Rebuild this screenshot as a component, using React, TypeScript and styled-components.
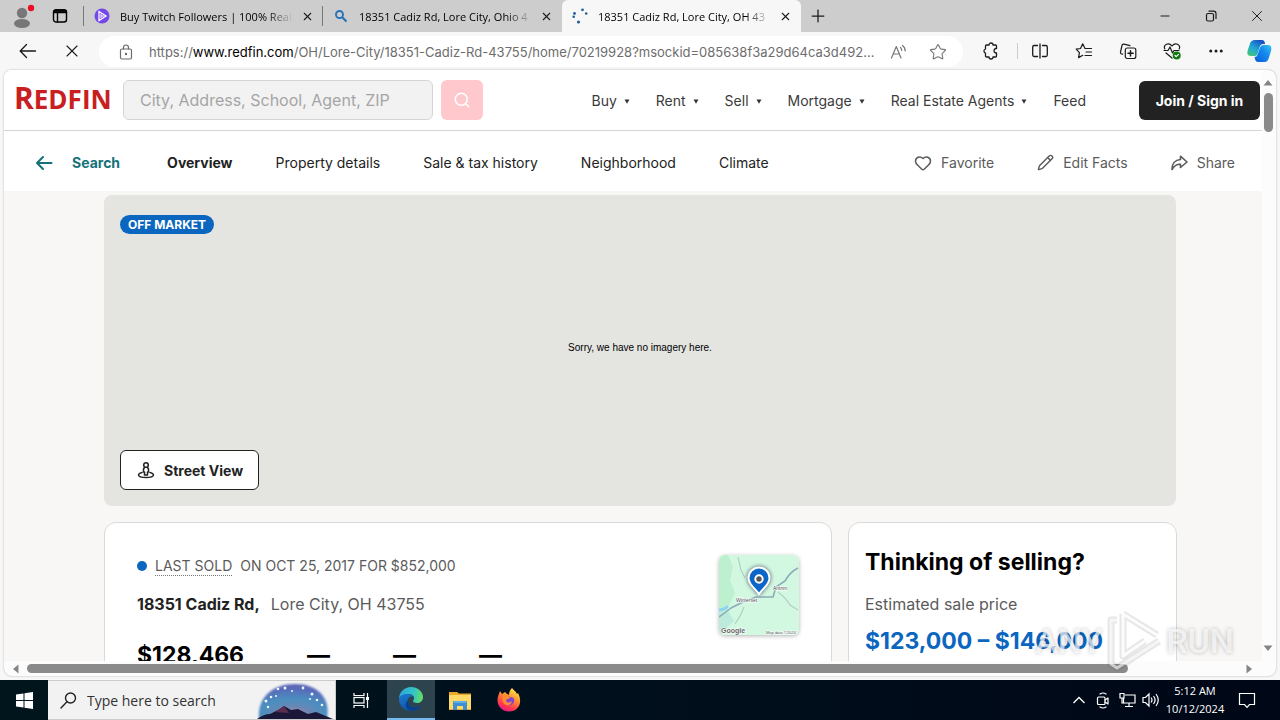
import React from "react";
import styled, { createGlobalStyle } from "styled-components";
import { X, Plus, Minus, Search, Star, Heart, Pencil, Ellipsis } from "lucide-react";

const GlobalStyle = createGlobalStyle`
  * { box-sizing: border-box; }
  body { margin: 0; overflow: hidden; }
  h1, h2, p { margin: 0; font-weight: inherit; }
  button, input { font: inherit; color: inherit; }
  button { background: none; border: 0; padding: 0; }
  a { color: inherit; text-decoration: none; }
  svg { display: block; flex: none; }
`;

const system = `"Open Sans", "Noto Sans", sans-serif`;
const brand = `Inter, "Liberation Sans", sans-serif`;

const Desktop = styled.div`
  height: 100vh;
  display: flex;
  flex-direction: column;
  overflow: hidden;
  background: #f7f7f7;
  font-family: ${system};
`;

/* ---------- Browser chrome ---------- */

const TabStrip = styled.header`
  display: flex;
  flex: none;
  height: 32px;
  background: #cdcdcd;
  font-size: 11px;
  color: #000;
`;

const TabLead = styled.div`
  width: 84px;
  display: flex;
  align-items: center;
  padding-left: 12px;
  gap: 17px;
`;

const Tab = styled.div<{ $active?: boolean }>`
  width: 239px;
  display: flex;
  align-items: center;
  gap: 8px;
  padding: 0 10px;
  background: ${(p) => (p.$active ? "#f7f7f7" : "transparent")};
  border-radius: 6px 6px 0 0;
`;

const TabTitle = styled.span`
  flex: 1;
  min-width: 0;
  white-space: nowrap;
  padding-left: 2px;
  mask-image: linear-gradient(to right, #000 85%, transparent);
`;

const TabDivider = styled.span`
  width: 1px;
  margin: 6px 0 6px -1px;
  background: #777;
`;

const ChromeButton = styled.button<{ $width?: number; $tone?: string }>`
  width: ${(p) => p.$width ?? 44}px;
  flex: none;
  display: flex;
  align-items: center;
  justify-content: center;
  color: ${(p) => p.$tone ?? "#1b1b1b"};
`;

const Spacer = styled.span`
  flex: 1;
`;

const Toolbar = styled.nav`
  display: flex;
  flex: none;
  align-items: stretch;
  height: 38px;
  padding: 0 0 1px 6px;
`;

const AddressBar = styled.div`
  flex: 1;
  min-width: 0;
  display: flex;
  align-items: center;
  margin: 4px 6px 2px 5px;
  padding: 0 5px 0 20px;
  border-radius: 16px;
  background: #fff;
  color: #6d6d6d;
  font-family: ${brand};
  font-size: 13px;
`;

const Url = styled.span`
  flex: 1;
  min-width: 0;
  margin-left: 16px;
  white-space: nowrap;
  b {
    font-weight: 400;
    color: #000;
  }
`;

const ToolDivider = styled.span`
  width: 1px;
  margin: 11px 0 10px 4px;
  background: #ccc;
`;

/* ---------- Page viewport ---------- */

const Viewport = styled.div`
  flex: 1;
  min-height: 0;
  display: grid;
  grid-template-columns: minmax(0, 1fr) 14px;
  grid-template-rows: minmax(0, 1fr) 15px;
  margin: 0 4px 4px;
  overflow: hidden;
  border-radius: 8px;
  background: #fcfcfc;
  box-shadow: 0 0 2px #aaa;
`;

const Page = styled.div`
  overflow: hidden;
  background: #f9f7f5;
  font-family: ${brand};
  font-size: 14px;
  color: #222;
`;

const ScrollTrack = styled.div<{ $row?: boolean }>`
  display: flex;
  flex-direction: ${(p) => (p.$row ? "row" : "column")};
  align-items: center;
  padding: ${(p) => (p.$row ? "0 8px 0 7px" : "10px 2px 10px 0")};
`;

const ScrollThumb = styled.span<{ $row?: boolean }>`
  flex: ${(p) => (p.$row ? "1101" : "39")} 0 0;
  width: ${(p) => (p.$row ? "auto" : "9px")};
  height: ${(p) => (p.$row ? "9px" : "auto")};
  margin: ${(p) => (p.$row ? "0 0 0 6px" : "7px 0 0")};
  border-radius: 5px;
  background: #8a8a8a;
`;

const ScrollRest = styled.span<{ $share: number }>`
  flex: ${(p) => p.$share} 0 0;
`;

const SiteHeader = styled.header`
  height: 61px;
  display: flex;
  align-items: center;
  padding: 0 2px 0 10px;
  background: #fff;
  border-bottom: 1px solid #d5d5d5;
`;

const Logo = styled.a`
  width: 109px;
  padding-bottom: 3px;
  font: 700 26px/32px "Open Sans", sans-serif;
  color: #c82021;
  span {
    font-size: 30px;
  }
`;

const SearchForm = styled.form`
  display: flex;
  gap: 8px;
`;

const SearchInput = styled.input`
  width: 310px;
  height: 40px;
  padding: 0 16px;
  border: 1px solid #d5d5d5;
  border-radius: 6px;
  background: #f2f2f2;
  font-size: 16px;
  &::placeholder {
    color: #a5a5a5;
  }
`;

const SearchButton = styled.button`
  width: 42px;
  height: 40px;
  display: grid;
  place-items: center;
  border-radius: 6px;
  background: #ffc8cc;
  color: #fff;
`;

const SiteNav = styled.nav`
  display: flex;
  gap: 26px;
  margin-left: auto;
  padding-top: 2px;
  color: #3b3b3b;
`;

const NavLink = styled.a`
  display: flex;
  align-items: center;
  gap: 7px;
  line-height: 20px;
  white-space: nowrap;
`;

const JoinButton = styled.button`
  width: 121px;
  height: 39px;
  margin-left: 53px;
  border-radius: 6px;
  background: #222;
  color: #fff;
  font-weight: 700;
`;

const SubNav = styled.nav`
  height: 60px;
  display: flex;
  align-items: center;
  gap: 43px;
  padding: 3px 27px 0 31px;
  background: #fff;
  white-space: nowrap;
`;

const SubLink = styled.a<{ $tone?: string; $bold?: boolean }>`
  display: flex;
  align-items: center;
  gap: 9px;
  line-height: 20px;
  color: ${(p) => p.$tone ?? "#222"};
  font-weight: ${(p) => (p.$bold ? 700 : 400)};
`;

const BackLink = styled(SubLink)`
  gap: 19px;
  padding-right: 4px;
`;

const SubActions = styled.div`
  display: flex;
  gap: 43px;
  margin-left: auto;
`;

const Content = styled.main`
  padding: 4px 85px 0 100px;
`;

const Hero = styled.section`
  height: 311px;
  display: flex;
  flex-direction: column;
  align-items: flex-start;
  justify-content: space-between;
  padding: 20px 16px 16px;
  margin-right: 1px;
  border-radius: 8px;
  background: #e4e5e0;
`;

const Badge = styled.span`
  padding: 0 8px;
  border-radius: 10px;
  background: #0b66bf;
  color: #fff;
  font-size: 12px;
  font-weight: 700;
  line-height: 19px;
`;

const NoImagery = styled.p`
  align-self: center;
  padding-top: 11px;
  font: 10px/12px "Liberation Sans", Arial, sans-serif;
  color: #000;
`;

const StreetViewButton = styled.button`
  height: 40px;
  display: flex;
  align-items: center;
  gap: 9px;
  padding: 0 15px 0 16px;
  border: 1px solid #222;
  border-radius: 6px;
  background: #fff;
  font-weight: 700;
`;

const Cards = styled.div`
  display: flex;
  gap: 16px;
  margin-top: 16px;
`;

const Card = styled.section<{ $side?: boolean }>`
  height: 320px;
  flex: ${(p) => (p.$side ? "0 0 329px" : "1")};
  min-width: 0;
  padding: ${(p) => (p.$side ? "23px 16px" : "32px")};
  border: 1px solid #d9d9d9;
  border-radius: 12px;
  background: #fff;
`;

const CardTop = styled.div`
  display: flex;
  justify-content: space-between;
  height: 81px;
`;

const SoldLine = styled.p`
  display: flex;
  align-items: center;
  gap: 8px;
  margin-top: 1px;
  line-height: 20px;
  color: #5b5b5b;
  abbr {
    line-height: 18px;
    text-decoration: none;
    border-bottom: 1px dotted #777;
  }
`;

const Dot = styled.span`
  width: 10px;
  height: 10px;
  border-radius: 50%;
  background: #0b66bf;
`;

const Address = styled.h1`
  display: flex;
  gap: 11px;
  margin-top: 16px;
  font-size: 16px;
  line-height: 24px;
  color: #5b5b5b;
  strong {
    color: #222;
  }
`;

const MapThumb = styled.a`
  width: 80px;
  height: 80px;
  overflow: hidden;
  border-radius: 6px;
  box-shadow: 0 1px 4px rgba(0, 0, 0, 0.3);
`;

const Stats = styled.div`
  display: flex;
  gap: 63px;
  margin-top: 2px;
  font-size: 23px;
  font-weight: 700;
  line-height: 34px;
  color: #000;
`;

const SideTitle = styled.h2`
  font-size: 23px;
  font-weight: 700;
  line-height: 32px;
  color: #000;
`;

const SideLabel = styled.p`
  margin-top: 14px;
  font-size: 16px;
  line-height: 24px;
  color: #5b5b5b;
`;

const SidePrice = styled.p`
  margin-top: 9px;
  font-size: 23px;
  font-weight: 700;
  line-height: 32px;
  color: #0b66bf;
`;

/* ---------- Watermark ---------- */

const Watermark = styled.div`
  position: absolute;
  right: 46px;
  bottom: 48px;
  display: flex;
  align-items: center;
  gap: 3px;
  font: 500 34px/60px Roboto, sans-serif;
  color: rgba(255, 255, 255, 0.7);
  text-shadow: 0 0 4px rgba(0, 0, 0, 0.25);
  pointer-events: none;
`;

/* ---------- Taskbar ---------- */

const Taskbar = styled.footer`
  display: flex;
  flex: none;
  height: 40px;
  background: linear-gradient(to right, #00151c, #000e1c 55%, #000716);
  color: #fff;
`;

const TaskButton = styled.button<{ $active?: boolean; $width?: number }>`
  width: ${(p) => p.$width ?? 49}px;
  flex: none;
  display: grid;
  place-items: center;
  background: ${(p) => (p.$active ? "#2d434d" : "transparent")};
  border-bottom: ${(p) => (p.$active ? "2px solid #76b9ed" : "0")};
`;

const TaskSearch = styled.label`
  width: 288px;
  display: flex;
  align-items: center;
  gap: 10px;
  padding-left: 12px;
  border: 1px solid #ccc;
  border-left: 0;
  background: #f2f2f2;
  color: #222;
  font-size: 14px;
  input {
    flex: 1;
    min-width: 0;
    padding: 0;
    border: 0;
    background: none;
  }
  input::placeholder {
    color: #333;
    opacity: 1;
  }
`;

const Clock = styled.time`
  width: 64px;
  text-align: center;
  font-size: 11px;
  line-height: 18px;
  padding-top: 2px;
`;

/* ---------- Drawings ---------- */

const line = { fill: "none", stroke: "currentColor", strokeLinecap: "round", strokeLinejoin: "round" } as const;

const Avatar = () => (
  <svg width="23" height="28" viewBox="0 0 23 28">
    <circle cx="10" cy="11" r="5.2" fill="#777" />
    <ellipse cx="10" cy="21.500" rx="8" ry="4.500" fill="#777" />
    <circle cx="19" cy="6" r="3.200" fill="#e81123" />
  </svg>
);

const TabActionsIcon = () => (
  <svg width="16" height="16" viewBox="0 0 16 16" {...line} strokeWidth="1.4">
    <rect x="1.500" y="2" width="13" height="12" rx="2.500" />
    <path d="M2 4.500V4a2 2 0 0 1 2-2h8a2 2 0 0 1 2.500 2v.5z" fill="#111" />
    <path d="M5.500 5v9" />
  </svg>
);

const TwitchServiceIcon = () => (
  <svg width="16" height="16" viewBox="0 0 16 16">
    <circle cx="8" cy="8" r="7.500" fill="#7547e8" />
    <path d="M5 3.500 12 8l-7 4.500z" fill="none" stroke="#fff" strokeWidth="1.300" />
    <path d="M7 6v4M7 8h3" stroke="#fff" />
  </svg>
);

const BlueSearchIcon = () => (
  <svg width="16" height="16" viewBox="0 0 16 16" fill="none" stroke="#2673b8" strokeWidth="1.900">
    <circle cx="6.500" cy="6.500" r="3.500" />
    <path d="m9 9 4.500 4.500" strokeWidth="2.200" />
  </svg>
);

const LoadingIcon = () => (
  <svg width="16" height="16" viewBox="0 0 16 16" fill="#245f9b">
    <circle cx="2.500" cy="5.500" r="1.400" />
    <circle cx="1.700" cy="8.700" r="1.300" />
    <circle cx="6.500" cy="14" r="1.600" />
    <circle cx="10.500" cy="1.800" r="1.400" />
    <circle cx="14.200" cy="5.500" r="1.300" />
  </svg>
);

const RestoreIcon = () => (
  <svg width="12" height="12" viewBox="0 0 12 12" {...line} strokeWidth="1.200">
    <rect x="1.500" y="3.500" width="7" height="7.500" rx="1.500" />
    <path d="M4 1.200h4.500A2.500 2.500 0 0 1 11 3.700V8.500" />
  </svg>
);

const LockIcon = () => (
  <svg width="14" height="16" viewBox="0 0 14 16" {...line} strokeWidth="1.200">
    <rect x="1.500" y="5" width="11" height="10" rx="1.500" />
    <path d="M4.500 5V3.500a2.500 2.500 0 0 1 5 0V5" />
    <circle cx="7" cy="10" r=".6" fill="currentColor" />
  </svg>
);

const ReadAloudIcon = () => (
  <svg width="17" height="16" viewBox="0 0 17 16" {...line} strokeWidth="1.200">
    <path d="M1.500 14 6.300 2.500 11 14M3.200 10h6.200M10.500 3.500q1.200 1 1.200 3M12.500 1.500q2.700 2 2.700 5.500" />
  </svg>
);

const ExtensionIcon = () => (
  <svg width="18" height="18" viewBox="0 0 18 18" {...line} strokeWidth="1.300">
    <path d="M4.500 3H7a2 2 0 0 1 4 0h2.500q1 0 1 1v2.500h-.7a2.300 2.300 0 0 0 0 4.500h.7v3q0 1-1 1H11a2 2 0 0 1-4 0H4.500q-1 0-1-1v-2.800a2.200 2.200 0 0 1 0-4.200V4q0-1 1-1z" />
  </svg>
);

const SplitIcon = () => (
  <svg width="18" height="18" viewBox="0 0 18 18" {...line} strokeWidth="1.300">
    <path d="M9 2v14M6.500 3.500H3.200A1.500 1.500 0 0 0 1.700 5v8a1.500 1.500 0 0 0 1.500 1.500h3.300M11.500 3.500h3.300A1.500 1.500 0 0 1 16.300 5v8a1.500 1.500 0 0 1-1.500 1.500h-3.300" />
  </svg>
);

const FavoritesIcon = () => (
  <svg width="18" height="18" viewBox="0 0 18 18" {...line} strokeWidth="1.200">
    <path d="M10 6.500 7.700 1.800 5.500 6.500l-4.300.7 3.200 3.400-.8 5 4.200-2.300M10 6.500h6.500M11 10h5.500M10 13.500h6.500" />
  </svg>
);

const CollectionsIcon = () => (
  <svg width="18" height="18" viewBox="0 0 18 18" {...line} strokeWidth="1.200">
    <path d="m3.700 12.200-1-.2a1.600 1.600 0 0 1-1.200-2L3 3.500a1.700 1.700 0 0 1 2-1.300l6 1.500" />
    <rect x="6.300" y="6" width="10.500" height="10.500" rx="2" />
    <path d="M11.500 8.700v5.200M9 11.300h5.200" strokeWidth="1.500" />
  </svg>
);

const HealthIcon = () => (
  <svg width="18" height="18" viewBox="0 0 18 18" {...line} strokeWidth="1.200">
    <path d="M1.800 7C0 3 5.500-.5 9 4c3.500-4.500 9-1 7.200 3M1 8.500h4L7 5l2.500 6L11 8.500h5M3 11l6 5" />
    <circle cx="13.700" cy="13.500" r="4" fill="#107c10" stroke="none" />
    <path d="m12 13.500 1.200 1.200 2.300-2.300" stroke="#fff" />
  </svg>
);

const CopilotIcon = () => (
  <svg width="25" height="24" viewBox="0 0 25 24">
    <defs>
      <linearGradient id="copilotLeft" x1="0" y1="1" x2=".7" y2="0">
        <stop offset="0" stopColor="#4acb69" />
        <stop offset=".5" stopColor="#21a9d5" />
        <stop offset="1" stopColor="#174fc2" />
      </linearGradient>
      <linearGradient id="copilotRight" x1="0" y1="1" x2="1" y2="0">
        <stop offset="0" stopColor="#0a5bd8" />
        <stop offset=".6" stopColor="#168cf0" />
        <stop offset="1" stopColor="#3ac7f0" />
      </linearGradient>
    </defs>
    <path d="M8 1h7q2 0 2.700 2L18 5h-2q-2.400 0-3.200 2.500l-2 7Q10 17 7.500 17H4Q-1 17 .8 11L3 4.500Q4.200 1 8 1z" fill="url(#copilotLeft)" />
    <path d="M17.500 23H11q-2 0-2.700-2L7.500 18q2.500 0 3.200-2.500l2.300-7Q13.800 6 16.500 6H21q4.500 0 3 6l-2.400 7.500Q20.500 23 17.500 23z" fill="url(#copilotRight)" />
  </svg>
);

const Caret = () => (
  <svg width="6" height="5" viewBox="0 0 6 5">
    <path d="M.5.500h5L3 4.800z" fill="#333" />
  </svg>
);

const Arrow = ({ turn = 0 }: { turn?: number }) => (
  <svg width="10" height="6" viewBox="-5 -3 10 6" overflow="visible">
    <path d="M-4.500 2.500 0-3l4.500 5.500z" fill="#858585" transform={`rotate(${turn})`} />
  </svg>
);

const BackArrowIcon = () => (
  <svg width="18" height="18" viewBox="0 0 18 18" {...line} strokeWidth="2">
    <path d="M16.500 9H2M8 3 2 9l6 6" />
  </svg>
);

const ShareIcon = () => (
  <svg width="17" height="16" viewBox="0 0 17 16" {...line} strokeWidth="1.600">
    <path d="M9.500 1.200 16 7l-6.500 5.500V9.300C5.500 9 3 11 1 14.500.8 9 4 5 9.500 4.500z" />
  </svg>
);

const PegmanIcon = () => (
  <svg width="18" height="18" viewBox="0 0 18 18" {...line} strokeWidth="1.500">
    <circle cx="9" cy="4" r="2.300" />
    <path d="M7.500 6.500 6.500 8v3h1v3h3v-3h1V8l-1-1.500M5 11.500c-6 1.500-4 5 4 5s10-3.500 4-5" />
  </svg>
);

const MapDrawing = () => (
  <svg width="80" height="80" viewBox="0 0 80 80">
    <rect width="80" height="80" fill="#d3f8e2" />
    <path d="M0 0h9l5 12-3 13 5 13-6 13L0 55z" fill="#bcf0cf" />
    <path d="M0 54l8-2 3 7 4 7-15 14z" fill="#bcebdc" />
    <path d="M19 2l3 13 4 8M25 52q-3 9-9 17M59 37q8 6 12 13l8 5" fill="none" stroke="#b3cfc4" strokeWidth="1.200" />
    <path d="M0 62q7-5 12-9 12-7 25-11h17l3-10 9-6q5-9 13-13" fill="none" stroke="#8bacb9" strokeWidth="1.600" />
    <path d="M0 55q5 0 9-4" fill="none" stroke="#8bd5ee" strokeWidth="3" />
    <g fontFamily="Liberation Sans, sans-serif" fill="#44504c" stroke="#fff" strokeWidth="1" paintOrder="stroke">
      <text x="17" y="47" fontSize="5">Winterset</text>
      <text x="54" y="35" fontSize="5">Antrim</text>
      <text x="2" y="78" fontSize="7" fontWeight="700" fill="#666">Google</text>
      <text x="47" y="79" fontSize="4">Map data ©2024</text>
    </g>
    <path d="M40 39C36 33 29.500 30 29.500 23a10.500 10.500 0 0 1 21 0C50.500 30 44 33 40 39z" fill="#0b66c8" stroke="#fff" strokeWidth="2" filter="drop-shadow(0 0 2px #456)" />
    <circle cx="40" cy="24" r="3.700" fill="#555" stroke="#fff" strokeWidth="2" />
  </svg>
);

const PlayMark = () => (
  <svg width="58" height="62" viewBox="0 0 58 62" fill="none" strokeLinejoin="round">
    <g stroke="#555" strokeOpacity=".14" strokeWidth="7">
      <path d="M18 4 52 25M18 4v42l22-15" />
      <path d="M12 10H6v44l6 4 42-27" />
    </g>
    <g stroke="#fff" strokeOpacity=".85" strokeWidth="3">
      <path d="M18 4 52 25M18 4v42l22-15" />
      <path d="M12 10H6v44l6 4 42-27" strokeOpacity=".6" />
    </g>
  </svg>
);

const WindowsIcon = () => (
  <svg width="17" height="17" viewBox="0 0 17 17" fill="#fff">
    <path d="M0 2.500 7.500 1.400V8H0zM8.500 1.300 17 0v8H8.500zM0 9h7.500v6.600L0 14.500zM8.500 9H17v8l-8.500-1.300z" />
  </svg>
);

const TaskSearchIcon = () => (
  <svg width="17" height="17" viewBox="0 0 17 17" {...line} strokeWidth="1.400">
    <circle cx="10.500" cy="6" r="5" />
    <path d="m7 9.800-6 6.200" />
  </svg>
);

const NightArt = styled.svg`
  align-self: flex-end;
`;

const SearchArt = () => (
  <NightArt width="78" height="37" viewBox="0 0 78 37">
    <defs>
      <radialGradient id="nightSky" cx=".5" cy=".9" r=".8">
        <stop offset="0" stopColor="#d9969a" />
        <stop offset=".3" stopColor="#6a86b4" />
        <stop offset=".6" stopColor="#4a8fc0" />
        <stop offset="1" stopColor="#5a66b8" />
      </radialGradient>
      <filter id="skySoft" x="-.1" y="-.1" width="1.200" height="1.200">
        <feGaussianBlur stdDeviation="1" />
      </filter>
    </defs>
    <path d="M2 37C0 15 16 2 38 2s36 13 32 35z" fill="url(#nightSky)" filter="url(#skySoft)" />
    <path d="M0 37q7-5 13-5l10-5 4-3 7 4 7-1 10 5 8-2 17 7z" fill="#1b1738" />
    <path d="m18 30 9-6 5 7z" fill="#5a2d4d" />
    <g fill="#e8f8ff">
      <circle cx="9" cy="19" r="1.500" /><circle cx="14" cy="15" r="1.300" /><circle cx="11" cy="25" r="1.200" />
      <circle cx="21" cy="7" r="1.300" /><circle cx="28" cy="6" r="1.500" /><circle cx="35" cy="9" r="1" />
      <circle cx="46" cy="6" r="1.400" /><circle cx="55" cy="12" r="1.500" /><circle cx="60" cy="18" r="1.300" />
      <circle cx="65" cy="23" r="1.300" /><circle cx="19" cy="14" r="1" /><circle cx="53" cy="17" r="1" />
    </g>
  </NightArt>
);

const TaskViewIcon = () => (
  <svg width="17" height="17" viewBox="0 0 17 17" fill="none" stroke="#fff" strokeWidth="1.200">
    <path d="M1 1v2.500h10V1M1 16v-2.500h10V16M14.500 1v15" />
    <rect x="1" y="5.500" width="10" height="5.500" />
    <path d="M14.500 5v3" strokeWidth="3" />
  </svg>
);

const EdgeIcon = () => (
  <svg width="24" height="24" viewBox="0 0 24 24">
    <defs>
      <linearGradient id="edgeTop" x1="0" y1=".5" x2="1" y2=".6">
        <stop offset="0" stopColor="#2aa9e0" />
        <stop offset=".6" stopColor="#35c3c4" />
        <stop offset="1" stopColor="#66e05e" />
      </linearGradient>
      <linearGradient id="edgeBody" x1="0" y1="0" x2=".6" y2="1">
        <stop offset="0" stopColor="#1a7dd3" />
        <stop offset="1" stopColor="#0c4fa0" />
      </linearGradient>
    </defs>
    <path d="M0 12C0 5 5.500 0 12 0s12 4.600 12 10c0 4-3 6-6 6-2.500 0-4-1-4-2 0-.7 1-1.200 1-3 0-2.500-3-4-6-4-5 0-9 3-9 5z" fill="url(#edgeTop)" />
    <path d="M0 12c0-3 4-5 8.500-5 3 0 5.500 1.500 6 3C11 8.500 8.500 11 9 14.500c.6 4 5 6 8.500 5.500 2-.3 3.500-1 4.500-1.500C20 22 16 24 12 24 5 24 0 18.500 0 12z" fill="url(#edgeBody)" />
    <path d="M9 13c-.5 5 4 8.500 8.500 7 2-.5 3.500-1 4.500-1.500C19 23.500 14 24.500 10 23c-4-2-4-7-1-10z" fill="#0a3f8a" />
  </svg>
);

const FolderIcon = () => (
  <svg width="22" height="19" viewBox="0 0 22 19">
    <path d="M0 1h8l2 1.500h12V19H0z" fill="#e8a92d" />
    <path d="M0 4h22v14H0z" fill="#ffd968" />
    <path d="M4 11q0-1 1-1h12q1 0 1 1v8h-4v-4H8v4H4z" fill="#3d8fd1" />
    <path d="M5 10h12v2H5z" fill="#5eb1e8" />
  </svg>
);

const FirefoxIcon = () => (
  <svg width="24" height="24" viewBox="0 0 24 24">
    <defs>
      <linearGradient id="foxFire" x1=".8" y1="0" x2=".3" y2="1">
        <stop offset="0" stopColor="#fff14f" />
        <stop offset=".4" stopColor="#ff9530" />
        <stop offset=".75" stopColor="#ff3b4c" />
        <stop offset="1" stopColor="#e31587" />
      </linearGradient>
    </defs>
    <path d="M15 0c1 2 4 3 5 6l1-1c5 9 1 18.500-9 18.500S-1.500 14 1.500 7L3 3l2 3 3-2 2 2c1 0 2 1 2 1 0-3 1-5 3-7z" fill="url(#foxFire)" />
    <path d="M8 8q3-1 5 1 5 0 4 5-2 4-7 3-3-1-3-5l2-1z" fill="#8045d5" />
    <path d="M6 7q4-1 5 1l3 1-3 2q-2 0-2 2 2 3 6 0-1 5-6 4-5-2-3-10z" fill="#ff8b2c" />
  </svg>
);

const TrayChevron = () => (
  <svg width="14" height="8" viewBox="0 0 14 8" fill="none" stroke="#fff" strokeWidth="1.300">
    <path d="M1.500 7 7 1.500 12.500 7" />
  </svg>
);

const MeetIcon = () => (
  <svg width="14" height="17" viewBox="0 0 14 17" {...line} strokeWidth="1.200">
    <rect x="1.500" y="5" width="7.500" height="7.500" rx="1" />
    <path d="m9 8 3-2v6L9 10M4 2q3-2 6 0M4 15q3 2 6 0" />
  </svg>
);

const NetworkIcon = () => (
  <svg width="17" height="16" viewBox="0 0 17 16" fill="none" stroke="#fff" strokeWidth="1.200">
    <path d="M6 3h10v8H4.500V6M10 11v3M6 14.500h8" />
    <path d="M1 1.500h4V6H1zM3 6v5h1.500" />
  </svg>
);

const VolumeIcon = () => (
  <svg width="18" height="16" viewBox="0 0 18 16" fill="none" stroke="#fff" strokeWidth="1.200">
    <path d="M1 5.500h2.500L7 2v12l-3.500-3.500H1zM9 5.500q2 2.500 0 5M11.500 4q3.200 4 0 8M14 2q4.500 6 0 12" />
  </svg>
);

const NoticeIcon = () => (
  <svg width="18" height="17" viewBox="0 0 18 17" fill="none" stroke="#fff" strokeWidth="1.200">
    <path d="M1.500 1.500h15v11h-5L9 15.300l-2.500-2.800h-5z" />
  </svg>
);

/* ---------- Data ---------- */

const tabs = [
  { title: "Buy Twitch Followers | 100% Real", icon: <TwitchServiceIcon /> },
  { title: "18351 Cadiz Rd, Lore City, Ohio 4", icon: <BlueSearchIcon /> },
  { title: "18351 Cadiz Rd, Lore City, OH 43", icon: <LoadingIcon />, active: true },
];

const siteLinks = ["Buy", "Rent", "Sell", "Mortgage", "Real Estate Agents", "Feed"];
const sections = ["Property details", "Sale & tax history", "Neighborhood", "Climate"];

const tools = [
  { label: "Split screen", icon: <SplitIcon /> },
  { label: "Favorites", icon: <FavoritesIcon /> },
  { label: "Collections", icon: <CollectionsIcon /> },
  { label: "Browser essentials", icon: <HealthIcon /> },
  { label: "Settings and more", icon: <Ellipsis size={18} /> },
];

export default function App() {
  return (
    <Desktop>
      <GlobalStyle />
      <TabStrip>
        <TabLead>
          <Avatar />
          <TabActionsIcon />
        </TabLead>
        <TabDivider />
        {tabs.map((tab, i) => (
          <React.Fragment key={tab.title}>
            <Tab $active={tab.active}>
              {tab.icon}
              <TabTitle>{tab.title}</TabTitle>
              <ChromeButton $width={12} aria-label="Close tab">
                <X size={13} strokeWidth={2} />
              </ChromeButton>
            </Tab>
            {i === 0 && <TabDivider />}
          </React.Fragment>
        ))}
        <ChromeButton $width={34} aria-label="New tab">
          <Plus size={20} strokeWidth={1.5} />
        </ChromeButton>
        <Spacer />
        <ChromeButton $width={46} aria-label="Minimize">
          <Minus size={14} strokeWidth={1.7} />
        </ChromeButton>
        <ChromeButton $width={46} aria-label="Restore">
          <RestoreIcon />
        </ChromeButton>
        <ChromeButton $width={46} aria-label="Close">
          <X size={18} strokeWidth={1.3} />
        </ChromeButton>
      </TabStrip>

      <Toolbar>
        <ChromeButton aria-label="Back">
          <svg width="18" height="16" viewBox="0 0 18 16" {...line} strokeWidth="1.300">
            <path d="M16.500 8H1.500M7.500 1.500 1.200 8l6.300 6.500" />
          </svg>
        </ChromeButton>
        <ChromeButton aria-label="Stop">
          <X size={20} strokeWidth={1.3} />
        </ChromeButton>
        <AddressBar>
          <LockIcon />
          <Url>
            https://<b>www.redfin.com</b>/OH/Lore-City/18351-Cadiz-Rd-43755/home/70219928?msockid=085638f3a29d64ca3d492...
          </Url>
          <ChromeButton $width={40} $tone="#777" aria-label="Read aloud">
            <ReadAloudIcon />
          </ChromeButton>
          <ChromeButton $width={40} $tone="#777" aria-label="Add to favorites">
            <Star size={18} strokeWidth={1.5} />
          </ChromeButton>
        </AddressBar>
        <ChromeButton aria-label="Extensions">
          <ExtensionIcon />
        </ChromeButton>
        <ToolDivider />
        {tools.map((tool) => (
          <ChromeButton key={tool.label} aria-label={tool.label}>
            {tool.icon}
          </ChromeButton>
        ))}
        <ChromeButton $width={42} aria-label="Copilot">
          <CopilotIcon />
        </ChromeButton>
      </Toolbar>

      <Viewport>
        <Page>
          <SiteHeader>
            <Logo href="#" aria-label="Redfin">
              <span>R</span>EDFIN
            </Logo>
            <SearchForm>
              <SearchInput aria-label="Search" placeholder="City, Address, School, Agent, ZIP" />
              <SearchButton type="button" aria-label="Submit search">
                <Search size={18} strokeWidth={2} />
              </SearchButton>
            </SearchForm>
            <SiteNav>
              {siteLinks.map((label) => (
                <NavLink href="#" key={label}>
                  {label}
                  {label !== "Feed" && <Caret />}
                </NavLink>
              ))}
            </SiteNav>
            <JoinButton>Join / Sign in</JoinButton>
          </SiteHeader>

          <SubNav>
            <BackLink href="#" $tone="#15727a" $bold>
              <BackArrowIcon />
              Search
            </BackLink>
            <SubLink href="#" $bold>
              Overview
            </SubLink>
            {sections.map((label) => (
              <SubLink href="#" key={label}>
                {label}
              </SubLink>
            ))}
            <SubActions>
              <SubLink as="button" $tone="#5b5b5b">
                <Heart size={18} />
                Favorite
              </SubLink>
              <SubLink as="button" $tone="#5b5b5b">
                <Pencil size={17} />
                Edit Facts
              </SubLink>
              <SubLink as="button" $tone="#5b5b5b">
                <ShareIcon />
                Share
              </SubLink>
            </SubActions>
          </SubNav>

          <Content>
            <Hero>
              <Badge>OFF MARKET</Badge>
              <NoImagery>Sorry, we have no imagery here.</NoImagery>
              <StreetViewButton>
                <PegmanIcon />
                Street View
              </StreetViewButton>
            </Hero>
            <Cards>
              <Card>
                <CardTop>
                  <div>
                    <SoldLine>
                      <Dot />
                      <abbr>LAST SOLD</abbr>
                      <span>ON OCT 25, 2017 FOR $852,000</span>
                    </SoldLine>
                    <Address>
                      <strong>18351 Cadiz Rd,</strong>
                      <span>Lore City, OH 43755</span>
                    </Address>
                  </div>
                  <MapThumb href="#" aria-label="Map">
                    <MapDrawing />
                  </MapThumb>
                </CardTop>
                <Stats>
                  <span>$128,466</span>
                  <span>—</span>
                  <span>—</span>
                  <span>—</span>
                </Stats>
              </Card>
              <Card $side>
                <SideTitle>Thinking of selling?</SideTitle>
                <SideLabel>Estimated sale price</SideLabel>
                <SidePrice>$123,000 – $146,000</SidePrice>
              </Card>
            </Cards>
          </Content>
        </Page>
        <ScrollTrack>
          <Arrow />
          <ScrollThumb />
          <ScrollRest $share={514} />
          <Arrow turn={180} />
        </ScrollTrack>
        <ScrollTrack $row>
          <Arrow turn={-90} />
          <ScrollThumb $row />
          <ScrollRest $share={116} />
          <Arrow turn={90} />
        </ScrollTrack>
      </Viewport>

      <Taskbar>
        <TaskButton $width={48} aria-label="Start">
          <WindowsIcon />
        </TaskButton>
        <TaskSearch>
          <TaskSearchIcon />
          <input aria-label="Search Windows" placeholder="Type here to search" />
          <SearchArt />
        </TaskSearch>
        <TaskButton $width={51} aria-label="Task view">
          <TaskViewIcon />
        </TaskButton>
        <TaskButton $width={48} $active aria-label="Edge">
          <EdgeIcon />
        </TaskButton>
        <TaskButton aria-label="File Explorer">
          <FolderIcon />
        </TaskButton>
        <TaskButton aria-label="Firefox">
          <FirefoxIcon />
        </TaskButton>
        <Spacer />
        <TaskButton $width={24} aria-label="Hidden icons"><TrayChevron /></TaskButton>
        <TaskButton $width={24} aria-label="Meet now"><MeetIcon /></TaskButton>
        <TaskButton $width={24} aria-label="Network"><NetworkIcon /></TaskButton>
        <TaskButton $width={24} aria-label="Volume"><VolumeIcon /></TaskButton>
        <Clock>
          5:12 AM
          <br />
          10/12/2024
        </Clock>
        <TaskButton $width={40} aria-label="Notifications"><NoticeIcon /></TaskButton>
        <TaskButton $width={13} aria-label="Show desktop" />
      </Taskbar>

      <Watermark>
        <span>ANY</span>
        <PlayMark />
        <span>RUN</span>
      </Watermark>
    </Desktop>
  );
}
